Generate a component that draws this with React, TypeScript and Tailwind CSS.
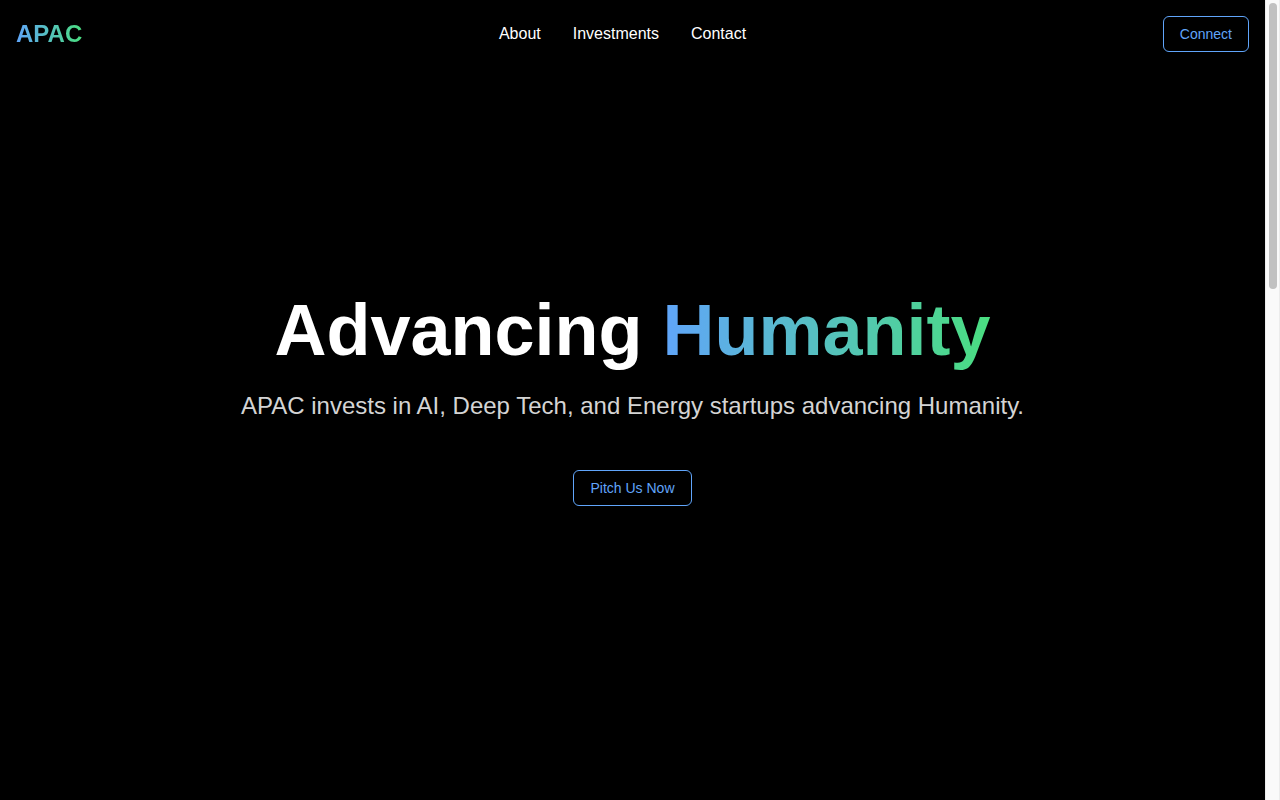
import type { ReactNode } from 'react';
import clsx from 'clsx';

const NAV_LINKS = [
    { label: 'About', href: '#about' },
    { label: 'Investments', href: '#investments' },
    { label: 'Contact', href: '#contact' },
];

interface GradientTextProps {
    children: ReactNode;
    className?: string;
}

function GradientText({ children, className }: GradientTextProps) {
    return (
        <span
            className={clsx(
                'bg-linear-to-r/srgb from-[#60a5fa] to-[#4ade80] bg-clip-text text-transparent',
                className
            )}
        >
            {children}
        </span>
    );
}

function OutlineButton({ children }: { children: ReactNode }) {
    return (
        <button
            type="button"
            className="inline-flex h-9 items-center justify-center whitespace-nowrap rounded-md border border-[#60a5fa] px-4 text-sm text-[#60a5fa] transition-colors hover:bg-[#60a5fa] hover:text-black"
        >
            {children}
        </button>
    );
}

function Header() {
    return (
        <header className="flex items-center justify-between p-4">
            <a href="#top" className="text-2xl font-bold">
                <GradientText>APAC</GradientText>
            </a>
            <nav className="flex gap-8">
                {NAV_LINKS.map((link) => (
                    <a key={link.href} href={link.href} className="text-white transition-colors hover:text-[#60a5fa]">
                        {link.label}
                    </a>
                ))}
            </nav>
            <OutlineButton>Connect</OutlineButton>
        </header>
    );
}

function Hero() {
    return (
        // bottom padding equals the header height, so the hero centres in the window
        <main className="flex flex-1 flex-col items-center justify-center px-4 pb-17 text-center">
            <h1 className="mb-6 text-7xl font-bold text-white">
                Advancing <GradientText>Humanity</GradientText>
            </h1>
            <p className="mb-12 text-2xl text-[#d4d4d4]">
                APAC invests in AI, Deep Tech, and Energy startups advancing Humanity.
            </p>
            <OutlineButton>Pitch Us Now</OutlineButton>
        </main>
    );
}

function ScrollTrack() {
    return (
        <div aria-hidden="true" className="w-[15px] shrink-0 border-x border-[#ececec] bg-[#fafafa] p-[3px]">
            <div className="h-[286px] w-2 rounded-full bg-[#c1c1c1]" />
        </div>
    );
}

export default function App() {
    return (
        <div id="top" className="flex min-h-screen bg-black font-['Liberation_Sans',Arial,sans-serif]">
            <div className="flex min-w-0 flex-1 flex-col">
                <Header />
                <Hero />
            </div>
            <ScrollTrack />
        </div>
    );
}
